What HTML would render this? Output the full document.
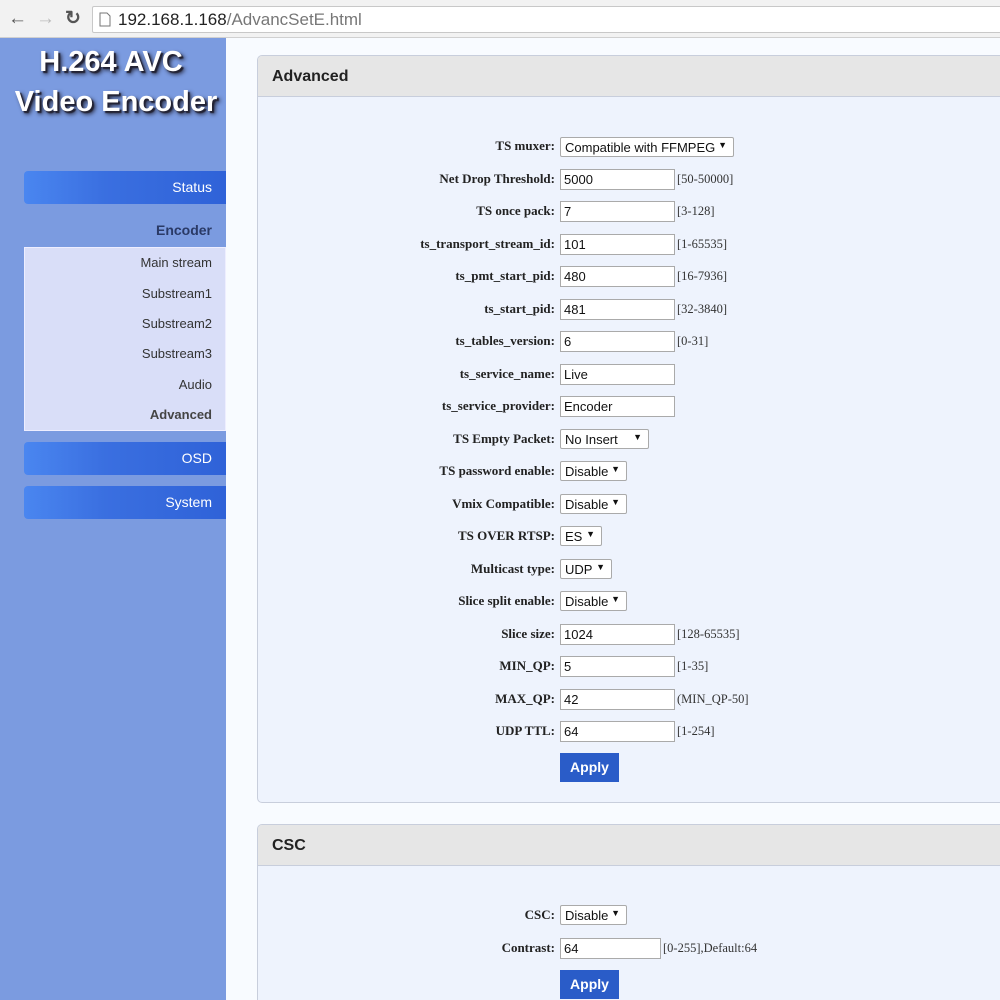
<!DOCTYPE html>
<html><head><meta charset="utf-8"><style>
*{margin:0;padding:0;box-sizing:border-box}
html,body{width:1000px;height:1000px;overflow:hidden}
body{background:#f8fbff;position:relative;font-family:"Liberation Sans",sans-serif}
.a{position:absolute}
#bar{left:0;top:0;width:1000px;height:38px;background:#f2f2f2;border-bottom:1px solid #d0d0d0}
#url{left:92px;top:6px;width:920px;height:27px;background:#fff;border:1px solid #c8c8c8;border-radius:2px;font-size:17px;color:#222;padding:3px 0 0 25px}
#url span{color:#777}
#side{left:0;top:38px;width:226px;height:962px;background:#7b9be0}
.logo{left:0;width:232px;text-align:center;color:#fff;font-weight:bold;font-size:29px;text-shadow:2px 2px 1px #223,3px 3px 4px #223}
.btn{left:24px;width:202px;height:33px;background:linear-gradient(90deg,#4a86f0,#3a6fe0 40%,#2f62d8);border-radius:4px 0 0 4px;color:#fff;font-size:14px;text-align:right;padding:8px 14px 0 0}
#sub{left:24px;top:247px;width:202px;height:184px;background:#d9def8;border:1px solid #eef;}
.si{font-size:13px;color:#333;text-align:right}
.panel{left:257px;width:760px;background:#eef3fd;border:1px solid #c8cedc;border-radius:5px;overflow:hidden}
.ph{height:41px;background:#e6e6e6;border-bottom:1px solid #c8cedc;font-size:16px;font-weight:bold;color:#222;padding:12px 0 0 14px}
.lb{left:257px;width:298px;text-align:right;font-family:"Liberation Serif",serif;font-weight:bold;font-size:13px;color:#222;line-height:22px}
.in{left:560px;width:115px;height:21px;background:#fff;border:1px solid #aaa;font-size:13px;padding:2px 0 0 3px;color:#111}
.sel{left:560px;height:20px;background:#fff;border:1px solid #aaa;border-radius:2px;font-size:13px;padding:2px 0 0 4px;color:#111}
.sel b{position:absolute;right:6px;top:2px;font-size:9px;font-weight:normal}
.hn{left:677px;font-family:"Liberation Serif",serif;font-size:12.5px;color:#333;line-height:22px}
.ap{left:560px;width:59px;height:29px;background:#2a5cc8;color:#fff;font-weight:bold;font-size:14px;text-align:center;padding-top:6px}
</style></head><body>
<div class="a" style="left:600px;top:0;width:400px;height:4px;background:#1e5fb4;border-radius:0 0 0 4px"></div>
<div class="a" id="bar"></div>
<div class="a" style="left:8px;top:8px;font-size:19px;color:#555">&#8592;</div>
<div class="a" style="left:36px;top:8px;font-size:19px;color:#bbb">&#8594;</div>
<div class="a" style="left:65px;top:7px;font-size:19px;color:#555;font-weight:bold">&#8635;</div>
<div class="a" id="url"><svg class="a" style="left:6px;top:5px" width="12" height="15"><path d="M1 1h7l3 3v10H1z" fill="none" stroke="#777"/></svg>192.168.1.168<span>/AdvancSetE.html</span></div>
<div class="a" id="side"></div>
<div class="a logo" style="top:46px;padding-right:10px">H.264 AVC</div>
<div class="a logo" style="top:86px">Video Encoder</div>
<div class="a btn" style="top:171px">Status</div>
<div class="a" style="left:24px;width:188px;top:222px;text-align:right;font-size:14px;font-weight:bold;color:#2a3a66">Encoder</div>
<div class="a" id="sub"></div>
<div class="a si" style="top:255px;right:788px">Main stream</div>
<div class="a si" style="top:286px;right:788px">Substream1</div>
<div class="a si" style="top:316px;right:788px">Substream2</div>
<div class="a si" style="top:346px;right:788px">Substream3</div>
<div class="a si" style="top:377px;right:788px">Audio</div>
<div class="a si" style="top:407px;right:788px;font-weight:bold;color:#444">Advanced</div>
<div class="a btn" style="top:442px">OSD</div>
<div class="a btn" style="top:486px">System</div>
<div class="a panel" style="top:55px;height:748px"><div class="ph">Advanced</div></div>
<div class="a panel" style="top:824px;height:200px"><div class="ph">CSC</div></div>

<div class="a lb" style="top:135px">TS muxer:</div><div class="a sel" style="top:137px;width:174px">Compatible with FFMPEG<b>&#9660;</b></div>
<div class="a lb" style="top:168px">Net Drop Threshold:</div><div class="a in" style="top:169px">5000</div><div class="a hn" style="top:168px">[50-50000]</div>
<div class="a lb" style="top:200px">TS once pack:</div><div class="a in" style="top:201px">7</div><div class="a hn" style="top:200px">[3-128]</div>
<div class="a lb" style="top:233px">ts_transport_stream_id:</div><div class="a in" style="top:234px">101</div><div class="a hn" style="top:233px">[1-65535]</div>
<div class="a lb" style="top:265px">ts_pmt_start_pid:</div><div class="a in" style="top:266px">480</div><div class="a hn" style="top:265px">[16-7936]</div>
<div class="a lb" style="top:298px">ts_start_pid:</div><div class="a in" style="top:299px">481</div><div class="a hn" style="top:298px">[32-3840]</div>
<div class="a lb" style="top:330px">ts_tables_version:</div><div class="a in" style="top:331px">6</div><div class="a hn" style="top:330px">[0-31]</div>
<div class="a lb" style="top:363px">ts_service_name:</div><div class="a in" style="top:364px">Live</div>
<div class="a lb" style="top:395px">ts_service_provider:</div><div class="a in" style="top:396px">Encoder</div>
<div class="a lb" style="top:428px">TS Empty Packet:</div><div class="a sel" style="top:429px;width:89px">No Insert<b>&#9660;</b></div>
<div class="a lb" style="top:460px">TS password enable:</div><div class="a sel" style="top:461px;width:67px">Disable<b>&#9660;</b></div>
<div class="a lb" style="top:493px">Vmix Compatible:</div><div class="a sel" style="top:494px;width:67px">Disable<b>&#9660;</b></div>
<div class="a lb" style="top:525px">TS OVER RTSP:</div><div class="a sel" style="top:526px;width:42px">ES<b>&#9660;</b></div>
<div class="a lb" style="top:558px">Multicast type:</div><div class="a sel" style="top:559px;width:52px">UDP<b>&#9660;</b></div>
<div class="a lb" style="top:590px">Slice split enable:</div><div class="a sel" style="top:591px;width:67px">Disable<b>&#9660;</b></div>
<div class="a lb" style="top:623px">Slice size:</div><div class="a in" style="top:624px">1024</div><div class="a hn" style="top:623px">[128-65535]</div>
<div class="a lb" style="top:655px">MIN_QP:</div><div class="a in" style="top:656px">5</div><div class="a hn" style="top:655px">[1-35]</div>
<div class="a lb" style="top:688px">MAX_QP:</div><div class="a in" style="top:689px">42</div><div class="a hn" style="top:688px">(MIN_QP-50]</div>
<div class="a lb" style="top:720px">UDP TTL:</div><div class="a in" style="top:721px">64</div><div class="a hn" style="top:720px">[1-254]</div>
<div class="a ap" style="top:753px">Apply</div>

<div class="a lb" style="top:904px">CSC:</div><div class="a sel" style="top:905px;width:67px">Disable<b>&#9660;</b></div>
<div class="a lb" style="top:937px">Contrast:</div><div class="a in" style="top:938px;width:101px">64</div><div class="a hn" style="top:937px;left:663px">[0-255],Default:64</div>
<div class="a ap" style="top:970px">Apply</div>
</body></html>
